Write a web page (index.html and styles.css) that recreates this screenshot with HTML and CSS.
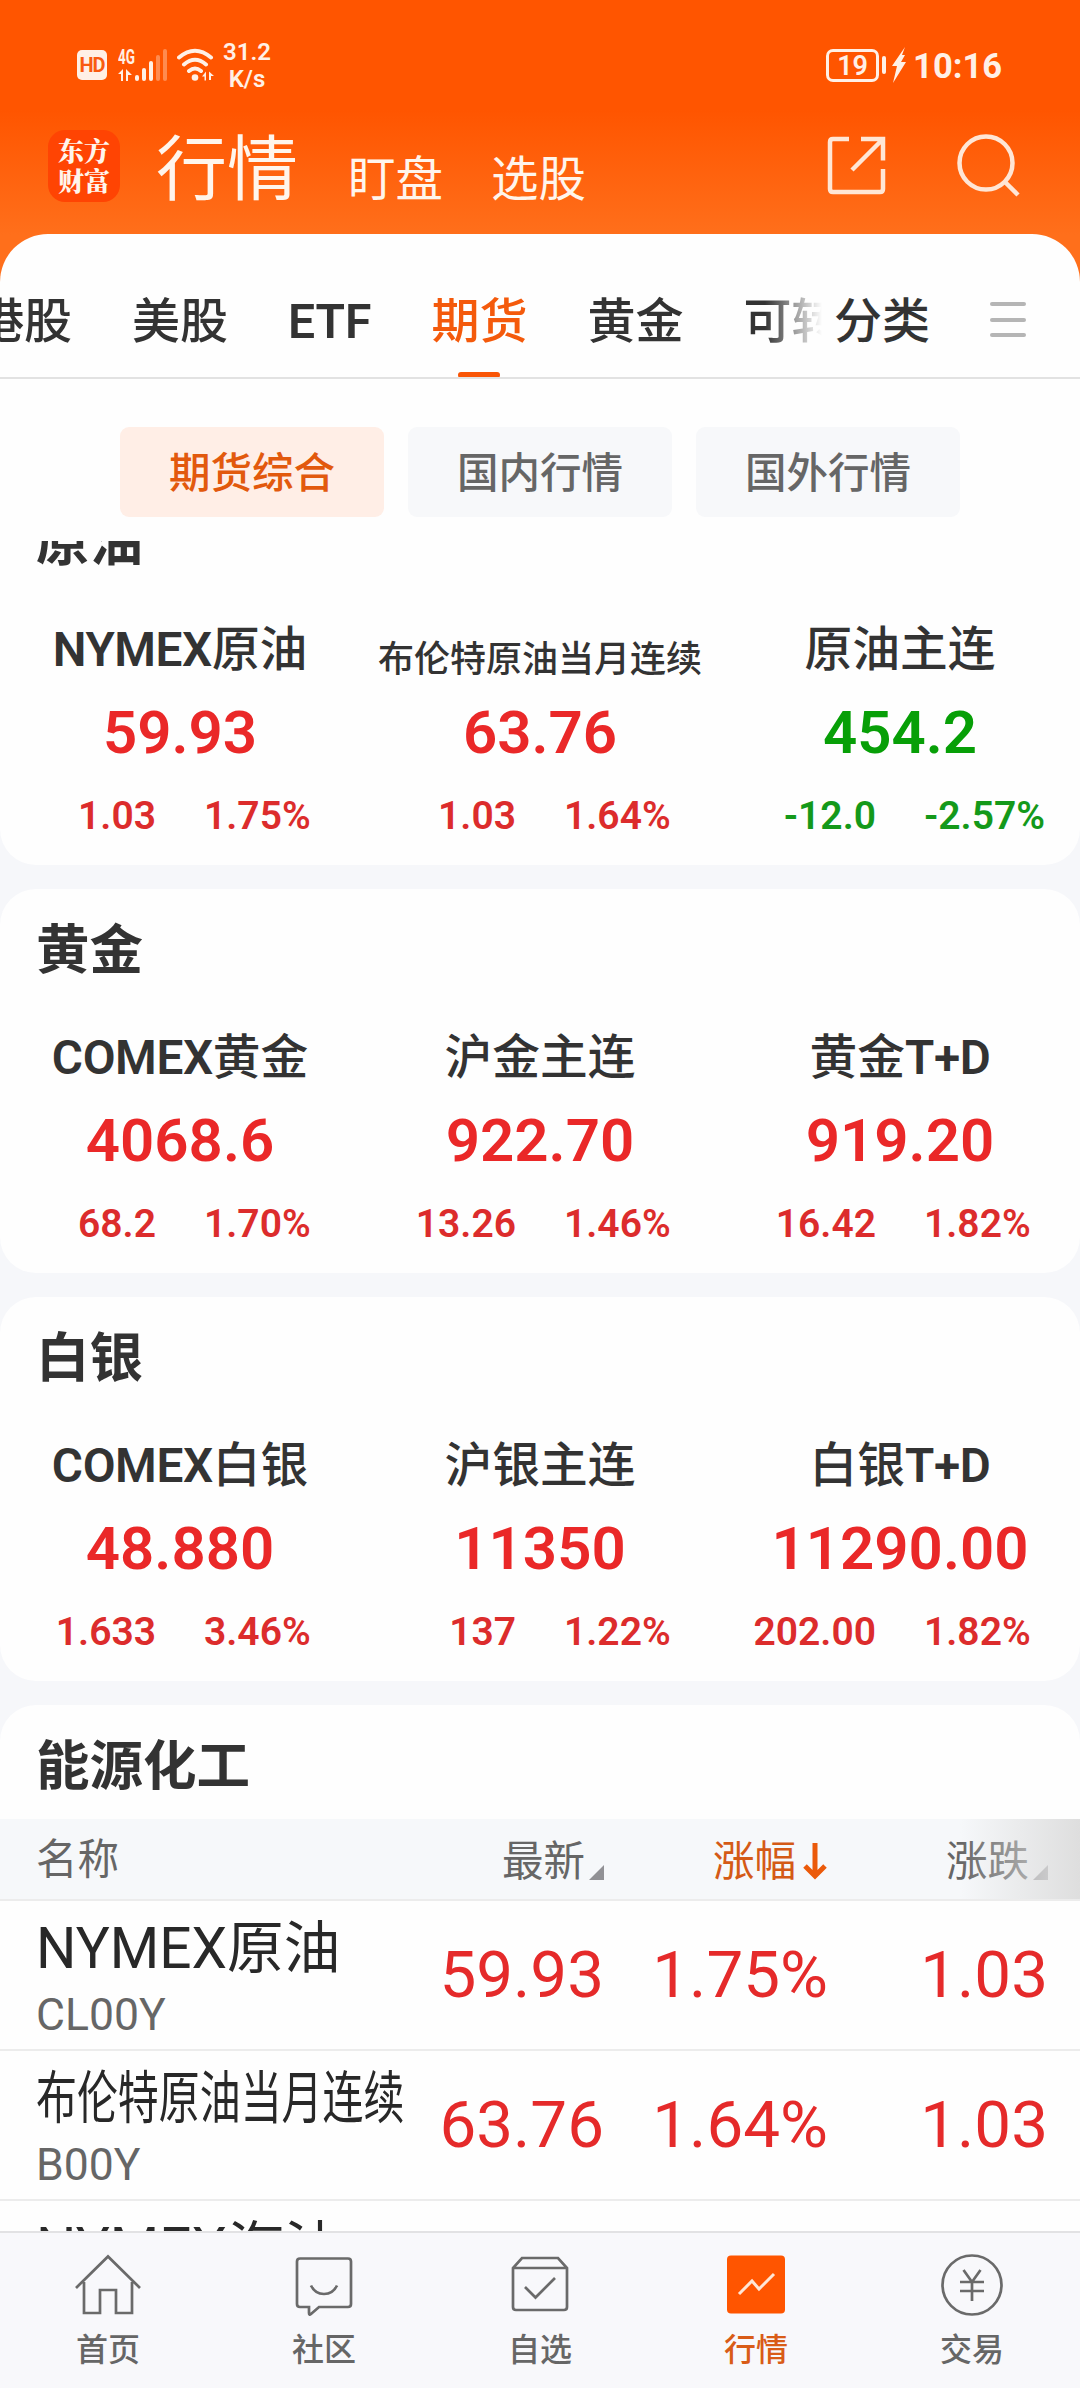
FILE: index.html
```html
<!DOCTYPE html>
<html lang="zh-CN">
<head>
<meta charset="utf-8">
<title>行情</title>
<link rel="stylesheet" href="styles.css">
</head>
<body>
<div class="app">
  <header class="top">
    <div class="status">
      <span class="hd">HD</span>
      <svg class="signal" width="51" height="34" viewBox="0 0 51 34" fill="#fff0e6">
        <text class="net-gen" x="0" y="15.500" textLength="17" lengthAdjust="spacingAndGlyphs">4G</text>
        <path d="M5 21v12H3V26H0zM8 21l6 6h-4v6H8z"/>
        <rect x="17" y="27" width="4" height="6" rx="2"/>
        <rect x="24" y="20" width="4" height="13" rx="2"/>
        <rect x="31" y="13" width="4" height="20" rx="2"/>
        <rect x="38" y="7" width="4" height="26" rx="2" opacity=".35"/>
        <rect x="45" y="1" width="4" height="32" rx="2" opacity=".35"/>
      </svg>
      <svg class="wifi" width="39" height="34" viewBox="0 0 39 34" fill="none" stroke="#fff0e6" stroke-width="4" stroke-linecap="round">
        <path d="M2 9.500Q18 -4 34 9.500M7 16.500Q18 7 29 16.500M12 23Q18 18 24 23"/>
        <circle cx="18" cy="29.500" r="3.300" fill="#fff0e6" stroke="none"/>
        <path d="M29 23.500v9h-1.500v-4H25zM32 23.500l5 4.500h-3V32h-2z" fill="#fff0e6" stroke="none"/>
      </svg>
      <div class="speed">31.2<br>K/s</div>
      <div class="status-right">
        <span class="battery">19</span>
        <span class="nub"></span>
        <svg class="bolt" width="14" height="36" viewBox="0 0 14 36" fill="#fff0e6"><path d="M13 0L0 19h5L1 36 14 15H9L13 8H10z"/></svg>
        <span class="clock">10:16</span>
      </div>
    </div>
    <div class="appbar">
      <div class="logo">东方<br>财富</div>
      <h1 class="title">行情</h1>
      <a class="link">盯盘</a>
      <a class="link">选股</a>
      <svg class="open" width="60" height="60" viewBox="0 0 60 60" fill="none" stroke="#ffe6d5" stroke-width="4.500">
        <path d="M22 3H6Q3 3 3 6V53Q3 56 6 56H53Q56 56 56 53V33M34 3H56V24.500M55 4L25 34"/>
      </svg>
      <svg class="search" width="64" height="66" viewBox="0 0 64 66" fill="none" stroke="#ffe6d5" stroke-width="4.500">
        <circle cx="29" cy="31" r="26.500"/><path d="M48 50L61 63"/>
      </svg>
    </div>
  </header>

  <main class="panel">
    <nav class="tabs">
      <div class="tab-scroll">
        <a>港股</a><a>美股</a><a class="en">ETF</a><a class="on">期货</a><a>黄金</a><a>可转债</a>
      </div>
      <a class="category">分类</a>
      <span class="menu"><i></i><i></i><i></i></span>
    </nav>
    <div class="chips">
      <a class="chip on">期货综合</a><a class="chip">国内行情</a><a class="chip">国外行情</a>
    </div>

    <div class="feed">
      <section class="card first">
        <h2>原油</h2>
        <div class="quotes">
          <div class="quote"><h3><span class="en">NYMEX</span>原油</h3><b>59.93</b><p><span>1.03</span><span>1.75%</span></p></div>
          <div class="quote"><h3 class="small">布伦特原油当月连续</h3><b>63.76</b><p><span>1.03</span><span>1.64%</span></p></div>
          <div class="quote down"><h3>原油主连</h3><b>454.2</b><p><span>-12.0</span><span>-2.57%</span></p></div>
        </div>
      </section>
      <section class="card">
        <h2>黄金</h2>
        <div class="quotes">
          <div class="quote"><h3><span class="en">COMEX</span>黄金</h3><b>4068.6</b><p><span>68.2</span><span>1.70%</span></p></div>
          <div class="quote"><h3>沪金主连</h3><b>922.70</b><p><span>13.26</span><span>1.46%</span></p></div>
          <div class="quote"><h3>黄金<span class="en">T+D</span></h3><b>919.20</b><p><span>16.42</span><span>1.82%</span></p></div>
        </div>
      </section>
      <section class="card">
        <h2>白银</h2>
        <div class="quotes">
          <div class="quote"><h3><span class="en">COMEX</span>白银</h3><b>48.880</b><p><span>1.633</span><span>3.46%</span></p></div>
          <div class="quote"><h3>沪银主连</h3><b>11350</b><p><span>137</span><span>1.22%</span></p></div>
          <div class="quote"><h3>白银<span class="en">T+D</span></h3><b>11290.00</b><p><span>202.00</span><span>1.82%</span></p></div>
        </div>
      </section>
      <section class="card list">
        <h2>能源化工</h2>
        <div class="row head">
          <span class="name">名称</span>
          <span>最新<i class="corner"></i></span>
          <span class="sorted">涨幅<svg width="24" height="38" viewBox="0 0 24 38" fill="none" stroke="#eb5a0a" stroke-width="5"><path d="M12 1V33M2 24L12 34L22 24"/></svg></span>
          <span>涨跌<i class="corner"></i></span>
        </div>
        <div class="row">
          <div class="name"><strong>NYMEX原油</strong><small>CL00Y</small></div>
          <span>59.93</span><span>1.75%</span><span>1.03</span>
        </div>
        <div class="row">
          <div class="name"><strong class="narrow">布伦特原油当月连续</strong><small>B00Y</small></div>
          <span>63.76</span><span>1.64%</span><span>1.03</span>
        </div>
        <div class="row">
          <div class="name"><strong>NYMEX汽油</strong></div>
        </div>
      </section>
    </div>
  </main>

  <nav class="bottom">
    <a>
      <svg width="68" height="64" viewBox="0 0 68 64"><path d="M2 35L34 3.500L66 35M10 29V60H26V37H42V60H58V29"/></svg>首页
    </a>
    <a>
      <svg width="68" height="64" viewBox="0 0 68 64"><path d="M10 5.500H58Q61 5.500 61 8.500V51Q61 54 58 54H29L21 61Q19 62.500 19 60V54H10Q7 54 7 51V8.500Q7 5.500 10 5.500Z"/><path d="M21 32.500Q25 41 34 41T47 32.500"/></svg>社区
    </a>
    <a>
      <svg width="68" height="64" viewBox="0 0 68 64"><path d="M7 15V54Q7 57 10 57H58Q61 57 61 54V15L52 5H16ZM7 15H61M19 34L29.500 44.500L49 25"/></svg>自选
    </a>
    <a class="on">
      <svg width="68" height="64" viewBox="0 0 68 64"><rect class="tile" x="5" y="2.500" width="58" height="58" rx="4"/><path class="trend" d="M17 41L30 28L37 36L52 21"/></svg>行情
    </a>
    <a>
      <svg width="68" height="64" viewBox="0 0 68 64"><circle cx="34" cy="32" r="29.500"/><path d="M25.500 17L34 29L42.500 17M34 29V48M22 29H46M22 38H46"/></svg>交易
    </a>
  </nav>
</div>
</body>
</html>
```
FILE: styles.css
```css
* { box-sizing: border-box; }
body {
  margin: 0;
  font-family: Roboto, "Noto Sans CJK SC", sans-serif;
  color: #333;
}
h1, h2, h3, p { margin: 0; }
i { font-style: normal; }
svg { display: block; flex: none; }
.app {
  display: flex;
  flex-direction: column;
  width: 1080px;
  height: 2388px;
  overflow: hidden;
}

/* Orange header */
.top {
  flex: none;
  height: 290px;
  background: linear-gradient(#ff5500 110px, #ff6f1b 235px);
  color: #fff5ec;
}
.status {
  display: flex;
  align-items: center;
  height: 130px;
  padding-left: 77px;
  color: #fff0e6;
}
.hd {
  width: 30px;
  height: 30px;
  border-radius: 5px;
  background: #fff0e6;
  color: #f95a10;
  font: 700 20px/31px Roboto, sans-serif;
  letter-spacing: -1px;
  text-align: center;
}
.signal { margin-left: 11px; }
.net-gen { font: 700 20px Roboto, sans-serif; }
.wifi { margin-left: 8px; }
.speed {
  width: 48px;
  margin: 1px 0 0 7px;
  font-size: 24px;
  font-weight: 600;
  line-height: 27px;
  text-align: center;
}
.status-right {
  display: flex;
  align-items: center;
  margin-left: auto;
  padding-right: 77px;
}
.battery {
  width: 53px;
  height: 33px;
  border: 3px solid #fff0e6;
  border-radius: 7px;
  font-size: 27px;
  font-weight: 600;
  line-height: 28px;
  text-align: center;
}
.nub {
  width: 4px;
  height: 18px;
  margin-left: 3px;
  border-radius: 2px;
  background: #fff0e6;
}
.bolt { margin-left: 6px; }
.clock {
  margin: 2px 1px 0 7px;
  font-size: 34.500px;
  font-weight: 700;
  line-height: 40px;
}
.appbar {
  display: flex;
  align-items: flex-start;
  padding-left: 48px;
}
.logo {
  width: 72px;
  height: 72px;
  padding-top: 5px;
  border-radius: 17px;
  background: #ff4403;
  font: 900 26px/30px "Noto Serif CJK SC", "Noto Sans CJK SC", sans-serif;
  text-align: center;
}
.title {
  margin: 4px 0 0 36px;
  font-size: 71px;
  font-weight: 400;
  line-height: 72px;
}
.link {
  margin: 18px 0 0 48px;
  font-size: 47.500px;
  line-height: 64px;
}
.title + .link { margin-left: 50px; }
.open { margin: 6px 0 0 auto; }
.search { margin: 2px 59px 0 70px; }

/* White sheet */
.panel {
  flex: 1;
  display: flex;
  flex-direction: column;
  min-height: 0;
  margin-top: -56px;
  border-radius: 48px 48px 0 0;
  background: #fefefe;
}
.tabs {
  display: flex;
  flex: none;
  height: 145px;
  border-bottom: 2px solid #e2e2e2;
  font-size: 48px;
  font-weight: 500;
  line-height: 175px;
}
.tab-scroll {
  display: flex;
  justify-content: flex-start;
  gap: 60px;
  width: 828px;
  overflow: hidden;
  white-space: nowrap;
  -webkit-mask-image: linear-gradient(90deg, #000 765px, transparent 822px);
  mask-image: linear-gradient(90deg, #000 765px, transparent 822px);
}
.tab-scroll a:first-child { margin-left: -24px; }
.tabs a { flex: none; }
.en { font-weight: 600; }
.tabs .on {
  display: flex;
  flex-direction: column;
  align-items: center;
  height: 144px;
  color: #f45a0c;
}
.tabs .on::after {
  content: "";
  flex: none;
  width: 42px;
  height: 6px;
  margin-top: -37px;
  border-radius: 3px;
  background: #f95506;
}
.category { margin-left: 6px; }
.menu {
  display: flex;
  flex-direction: column;
  gap: 11.500px;
  margin: 68px 0 0 60px;
}
.menu i { width: 36px; height: 4px; border-radius: 2px; background: #b5b5b5; }
.chips {
  display: flex;
  flex: none;
  justify-content: center;
  gap: 24px;
  height: 162px;
  padding-top: 48px;
}
.chip {
  width: 264px;
  height: 90px;
  border-radius: 9px;
  background: #f7f8fa;
  color: #666;
  font-size: 41.500px;
  font-weight: 500;
  line-height: 94px;
  text-align: center;
}
.chip.on { background: #ffeee6; color: #e2590d; }

/* Scrolling cards */
.feed {
  flex: 1;
  min-height: 0;
  overflow: hidden;
  background: #f6f7fa;
}
.card {
  height: 384px;
  margin-bottom: 24px;
  overflow: hidden;
  border-radius: 36px;
  background: #fefefe;
}
.card.first { margin-top: -60px; }
.card h2 {
  padding-left: 36px;
  font-size: 53.500px;
  font-weight: 700;
  line-height: 124px;
  height: 114px;
}
.quotes { display: grid; grid-template-columns: repeat(3, 360px); }
.quote { text-align: center; color: #ea2828; }
.quote.down { color: #079f07; }
.quote h3 {
  height: 88px;
  color: #333;
  font-size: 47.700px;
  font-weight: 450;
  line-height: 111px;
  white-space: nowrap;
}
.quote h3 .en { letter-spacing: -.4px; }
.quote h3.small { font-size: 36px; line-height: 130px; }
.quote b {
  display: block;
  height: 82px;
  font-size: 60px;
  font-weight: 600;
  line-height: 100px;
}
.quote p {
  display: grid;
  grid-template-columns: 156px 156px;
  gap: 48px;
  font-size: 39px;
  font-weight: 600;
  line-height: 102px;
  white-space: nowrap;
  color: #dc2c2c;
}
.quote.down p { color: #14991a; }
.quote p span:first-child { text-align: right; }
.quote p span:last-child { text-align: left; }

/* Price list */
.list { height: 700px; border-radius: 36px 36px 0 0; }
.row {
  display: grid;
  grid-template-columns: 369px 199px 224px 220px;
  height: 150px;
  padding-left: 36px;
  border-bottom: 2px solid #ececec;
  color: #e52a2a;
  font-size: 65.500px;
  line-height: 147px;
  text-align: right;
  white-space: nowrap;
}
.row .name { text-align: left; }
.row strong {
  display: block;
  height: 90px;
  color: #282828;
  font-size: 56.700px;
  font-weight: 400;
  line-height: 95px;
}
.row strong.narrow { width: 520px; transform: scaleX(.722); transform-origin: 0 0; }
.row small { display: block; color: #666; font-size: 44.500px; line-height: 48px; }
.row.head {
  position: relative;
  height: 82px;
  background: #f6f8fa;
  color: #666;
  font-size: 41.500px;
  line-height: 86px;
}
.head .name { line-height: 82px; }
.row.head::after {
  content: "";
  position: absolute;
  inset: 0 0 0 auto;
  width: 120px;
  background: linear-gradient(90deg, rgba(224, 224, 224, 0), #dedede);
}
.head span:not(.name) { display: flex; justify-content: flex-end; }
.head .sorted { color: #d45a16; padding-right: 1px; }
.sorted svg { margin: 23px 0 0 7px; }
.corner {
  width: 15px;
  height: 15px;
  margin: 46px 0 0 4px;
  background: #919195;
  clip-path: polygon(100% 0, 100% 100%, 0 100%);
}

/* Bottom navigation */
.bottom {
  display: grid;
  flex: none;
  grid-template-columns: repeat(5, 1fr);
  height: 157px;
  border-top: 2px solid #e2e2e4;
  background: #f8f8fb;
}
.bottom a {
  display: flex;
  flex-direction: column;
  align-items: center;
  padding-top: 20px;
  color: #666;
  font-size: 32px;
  font-weight: 500;
  line-height: 66px;
}
.bottom svg { fill: none; stroke: #6a6a6a; stroke-width: 2.700; }
.bottom .on { color: #d95c17; }
.bottom .tile { fill: #f50; stroke: none; }
.bottom .trend { stroke: #ffe6d5; stroke-width: 3; }
```
